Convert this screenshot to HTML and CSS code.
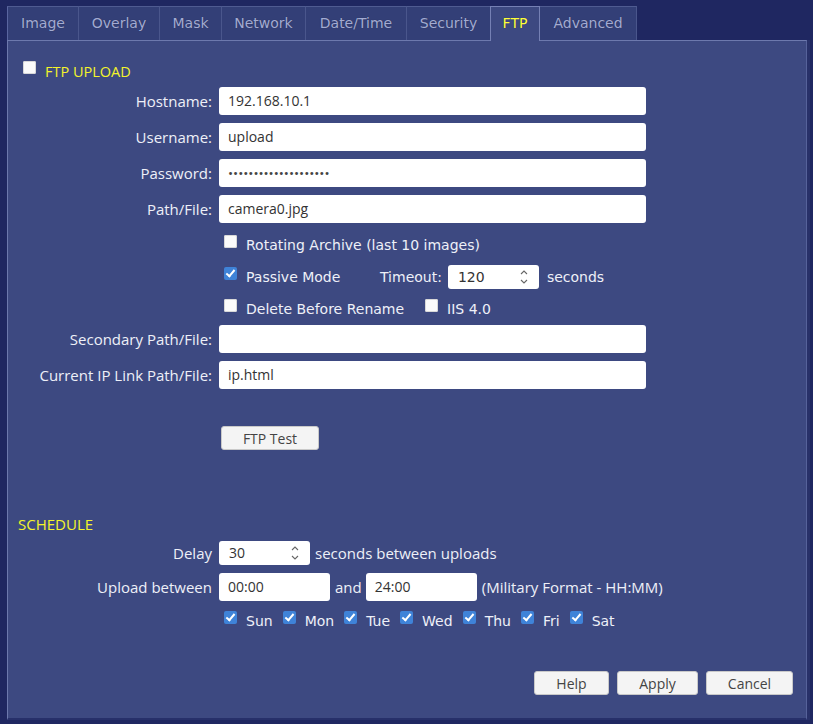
FILE: index.html
```html
<!DOCTYPE html>
<html>
<head>
<meta charset="utf-8">
<link rel="stylesheet" href="styles.css">
</head>
<body>
<div class="tabs">
  <div class="tab t-image">Image</div>
  <div class="tab t-overlay">Overlay</div>
  <div class="tab t-mask">Mask</div>
  <div class="tab t-network">Network</div>
  <div class="tab t-date">Date/Time</div>
  <div class="tab t-security">Security</div>
  <div class="tab t-ftp active">FTP</div>
  <div class="tab t-advanced">Advanced</div>
</div>
<div class="panel">
  <div class="head-row">
    <span class="cb"></span><span class="section ftp">FTP UPLOAD</span>
  </div>
  <div class="row"><label class="lbl">Hostname:</label><div class="field wide">192.168.10.1</div></div>
  <div class="row"><label class="lbl">Username:</label><div class="field wide">upload</div></div>
  <div class="row"><label class="lbl">Password:</label><div class="field wide pw">••••••••••••••••••••</div></div>
  <div class="row"><label class="lbl">Path/File:</label><div class="field wide">camera0.jpg</div></div>

  <div class="crow first"><span class="cb"></span><span class="ctext">Rotating Archive (last 10 images)</span></div>
  <div class="crow"><span class="cb on"></span><span class="ctext passive">Passive Mode</span>
    <span class="ctext">Timeout:</span>
    <div class="field spin t">120<span class="spinner"><svg width="8" height="16" viewBox="0 0 8 16"><path d="M1 5 L4 2 L7 5 M1 11 L4 14 L7 11" fill="none" stroke="#666" stroke-width="1.1"/></svg></span></div>
    <span class="ctext">seconds</span>
  </div>
  <div class="crow"><span class="cb"></span><span class="ctext delete">Delete Before Rename</span><span class="cb"></span><span class="ctext">IIS 4.0</span></div>

  <div class="row sec"><label class="lbl">Secondary Path/File:</label><div class="field wide"></div></div>
  <div class="row"><label class="lbl">Current IP Link Path/File:</label><div class="field wide">ip.html</div></div>

  <div class="testrow"><button class="btn test">FTP Test</button></div>

  <div class="section sched">SCHEDULE</div>
  <div class="row small"><label class="lbl">Delay</label>
    <div class="field spin d">30<span class="spinner"><svg width="8" height="16" viewBox="0 0 8 16"><path d="M1 5 L4 2 L7 5 M1 11 L4 14 L7 11" fill="none" stroke="#666" stroke-width="1.1"/></svg></span></div>
    <span class="after">seconds between uploads</span></div>
  <div class="row up"><label class="lbl">Upload between</label>
    <div class="field time">00:00</div><span class="and">and</span><div class="field time">24:00</div><span class="after">(Military Format - HH:MM)</span></div>
  <div class="days">
    <span class="cb on"></span><span class="day">Sun</span>
    <span class="cb on"></span><span class="day">Mon</span>
    <span class="cb on"></span><span class="day">Tue</span>
    <span class="cb on"></span><span class="day">Wed</span>
    <span class="cb on"></span><span class="day">Thu</span>
    <span class="cb on"></span><span class="day">Fri</span>
    <span class="cb on"></span><span class="day">Sat</span>
  </div>

  <div class="actions">
    <button class="btn help">Help</button>
    <button class="btn apply">Apply</button>
    <button class="btn cancel">Cancel</button>
  </div>
</div>
</body>
</html>
```
FILE: styles.css
```css
html, body {
  margin: 0;
  padding: 0;
  background: #1f2761;
}
body {
  width: 813px;
  height: 724px;
  overflow: hidden;
  padding: 6px 0 0 7px;
  box-sizing: border-box;
  font-family: "DejaVu Sans", sans-serif;
}
.tabs {
  display: flex;
  height: 34px;
}
.tab {
  box-sizing: border-box;
  height: 34px;
  text-align: center;
  line-height: 33px;
  font-size: 14px;
  color: #a3abd2;
  background: #333f77;
  border-top: 1px solid #4f5b91;
  border-left: 1px solid #4a568c;
  text-shadow: 0 0 1px rgba(0,0,0,0.3);
  flex: none;
}
.t-image { width: 71px; border-left: 1px solid #5a66a0; }
.t-overlay { width: 81px; }
.t-mask { width: 62px; }
.t-network { width: 84px; }
.t-date { width: 101px; }
.t-security { width: 84px; }
.t-ftp { width: 50px; }
.t-advanced { width: 97px; border-right: 1px solid #4a568c; }
.tab.active {
  color: #ffff3a;
  background: #3d4981;
  border-top: 1px solid #7580b4;
  border-left: 1px solid #7580b4;
  border-right: 1px solid #7580b4;
  height: 35px;
  position: relative;
  z-index: 2;
}
.tab.active + .tab { border-left: none; }
.panel {
  box-sizing: border-box;
  width: 800px;
  height: 680px;
  background: #3d4981;
  border-top: 1px solid #6d79ad;
  border-left: 1px solid #6d79ad;
  border-right: 1px solid #56629a;
  border-bottom: 2px solid #27306a;
  box-shadow: 3px 0 0 #283169;
  font-family: "Open Sans", sans-serif;
  font-size: 15px;
  color: #eef0f8;
}
.head-row {
  display: flex;
  align-items: center;
  height: 20px;
  margin: 20px 0 0 15px;
}
.head-row .cb { margin: -7px 9px 0 0; }
.section {
  color: #f4f42a;
  font-size: 15px;
}
.section.ftp { font-size: 14.5px; }
.cb {
  display: inline-block;
  width: 13px;
  height: 13px;
  border-radius: 2px;
  background: #fbfbfb;
  flex: none;
  position: relative;
  box-shadow: inset 0 0 0 1px #d8d8d8;
}
.cb.on {
  background: #3f83d8;
  box-shadow: none;
}
.cb.on::after {
  content: "";
  position: absolute;
  left: 4px;
  top: 1px;
  width: 3px;
  height: 7px;
  border: solid #fff;
  border-width: 0 2px 2px 0;
  transform: rotate(40deg);
}
.row {
  display: flex;
  align-items: center;
  height: 28px;
  margin-top: 8px;
}
.head-row + .row { margin-top: 6px; }
.lbl {
  width: 204px;
  text-align: right;
  padding-right: 7px;
  flex: none;
}
.field {
  box-sizing: border-box;
  background: #fff;
  border-radius: 3px;
  height: 28px;
  line-height: 28px;
  padding: 0 9px;
  color: #333;
  font-size: 14px;
  flex: none;
}
.wide { width: 427px; }
.pw { font-size: 13.5px; color: #444; }
.crow {
  display: flex;
  align-items: center;
  height: 24px;
  margin-top: 8px;
  padding-left: 216px;
  font-family: "DejaVu Sans", sans-serif;
  font-size: 14px;
}
.crow.first { margin-top: 10px; }
.crow .cb { margin: -8px 9px 0 0; }
.ctext { margin-right: 4px; }
.passive { width: 130px; }
.delete { margin-right: 21px; }
.spin {
  position: relative;
  height: 24px;
  line-height: 24px;
  padding-left: 10px;
}
.spin.t { width: 91px; margin: 0 8px 0 2px; }
.spin.d { width: 91px; margin-right: 5px; }
.spinner {
  position: absolute;
  right: 11px;
  top: 4px;
  line-height: 0;
}
.row.sec { margin-top: 4px; }
.testrow {
  padding-left: 213px;
  margin-top: 37px;
}
.btn {
  box-sizing: border-box;
  background: #f4f4f4;
  border: 1px solid #c9c9c9;
  border-radius: 3px;
  height: 24px;
  font-family: "Open Sans", sans-serif;
  font-size: 14px;
  color: #444;
  padding: 0;
}
.btn.test { width: 98px; }
.sched {
  display: block;
  margin: 64px 0 0 10px;
}
.row.small {
  height: 24px;
  margin-top: 7px;
}
.row.up { margin-top: 8px; }
.time { width: 111px; }
.and { margin: 0 4px 0 5px; }
.time + .after { margin-left: 5px; }
.days {
  display: flex;
  align-items: center;
  margin-top: 8px;
  padding-left: 216px;
  height: 24px;
  font-family: "DejaVu Sans", sans-serif;
  font-size: 14px;
}
.days .cb { margin: -8px 9px 0 0; }
.day { margin-right: 10px; }
.actions {
  display: flex;
  justify-content: flex-end;
  margin-top: 38px;
  padding-right: 13px;
  gap: 8px;
}
.btn.help { width: 75px; }
.btn.apply { width: 81px; }
.btn.cancel { width: 87px; }
```
